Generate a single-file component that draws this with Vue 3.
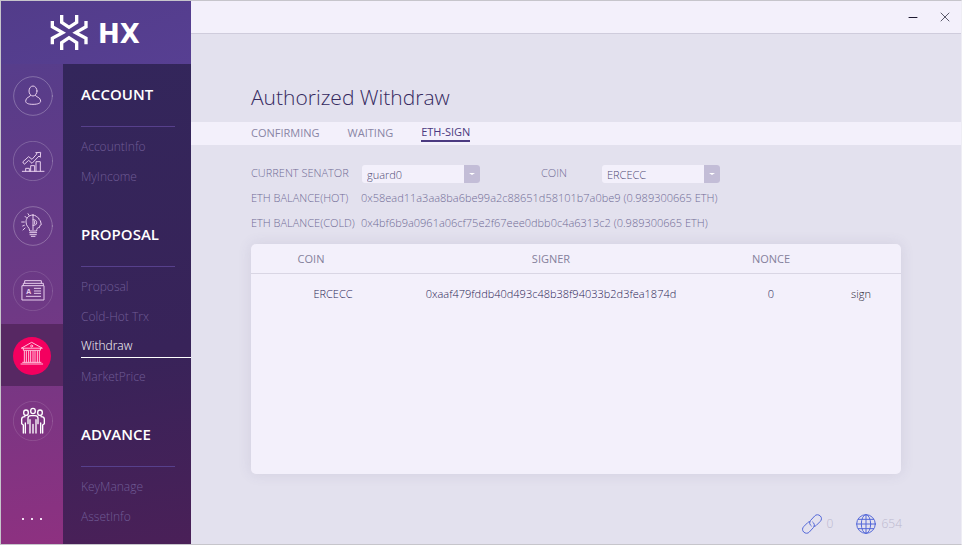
<script setup>
import { ref } from 'vue'

const groups = [
  { title: 'ACCOUNT', items: ['AccountInfo', 'MyIncome'] },
  { title: 'PROPOSAL', items: ['Proposal', 'Cold-Hot Trx', 'Withdraw', 'MarketPrice'] },
  { title: 'ADVANCE', items: ['KeyManage', 'AssetInfo'] },
]
const tabs = ['CONFIRMING', 'WAITING', 'ETH-SIGN']
const currentTab = ref('ETH-SIGN')
const currentItem = ref('Withdraw')
const senator = ref('guard0')
const coin = ref('ERCECC')
const rows = [
  { coin: 'ERCECC', signer: '0xaaf479fddb40d493c48b38f94033b2d3fea1874d', nonce: 0 },
]
</script>

<template>
  <div class="window">
    <aside class="sidebar">
      <div class="brand">
        <svg class="mark" viewBox="150 45 114 111" aria-hidden="true">
          <path d="M185 48v22l22 15 23-15V48M185 153v-22l22-15 23 15v22M157 66v17l31 18-31 17v18M258 66v17l-31 18 31 17v18" />
        </svg>
        <span class="wordmark">HX</span>
      </div>
      <div class="columns">
        <nav class="rail" aria-label="Sections">
          <button class="rail-item" aria-label="Account">
            <svg viewBox="0 0 120 120">
              <circle class="ring bright" cx="60" cy="60" r="58" />
              <ellipse cx="60" cy="45" rx="12" ry="15" />
              <path d="M53 58c-1 6-15 5-15 17 0 6 6 10 22 10s23-4 23-10c0-12-15-11-16-17" />
            </svg>
          </button>
          <button class="rail-item" aria-label="Income">
            <svg viewBox="0 0 120 120">
              <circle class="ring" cx="60" cy="60" r="59" />
              <path d="M28 91h65M38 91v-9h11v9M53 91V74h12v17M69 91V62h13v29" />
              <path d="M30 62l17-15 10 8 15-17-4-3 15-1-1 15-4-4-21 22-10-9-12 11z" />
            </svg>
          </button>
          <button class="rail-item" aria-label="Ideas">
            <svg viewBox="0 0 120 120">
              <circle class="ring bright" cx="60" cy="60" r="58" />
              <path d="M60 27c-14 0-21 10-21 21 0 14 11 15 11 27h21c0-8 3-11 8-10l2-7 4-2-2-8c0-5-5-6-5-9-1-6-8-5-9-9-3-1-6-3-9-3zM60 27v44M50 80h21M51 86h19M55 91h11" />
              <path d="M60 41c7-1 12 4 11 9 0 6-5 9-11 8M65 45v9M36 31l5 5M26 48h8M36 66l-6 6M45 23l3 5M29 60l5-2" />
            </svg>
          </button>
          <button class="rail-item" aria-label="Proposals">
            <svg viewBox="0 0 120 120">
              <circle class="ring faint" cx="60" cy="60" r="59" />
              <path d="M28 44h65v43H28zM31 43v-6h60v6M35 36v-7h50v7" />
              <path d="M64 52h19M64 60h19M64 67h19M40 76h43" />
              <text x="40" y="68">A</text>
            </svg>
          </button>
          <button class="rail-item active" aria-label="Withdraw">
            <svg viewBox="0 0 120 120">
              <circle class="disc" cx="60" cy="60" r="57" />
              <path d="M29 36l30-17 31 17zM34 37v6h51v-6M37 45v33M43 45v33M50 45v33M56 45v33M63 45v33M69 45v33M76 45v33M82 45v33M32 79h55M27 84h65" />
              <circle cx="59" cy="30" r="3" />
            </svg>
          </button>
          <button class="rail-item" aria-label="Members">
            <svg class="strong" viewBox="0 0 120 120">
              <circle class="ring faint" cx="60" cy="60" r="59" />
              <ellipse cx="39" cy="35" rx="7" ry="8" /><ellipse cx="60" cy="30" rx="7" ry="8" /><ellipse cx="81" cy="35" rx="7" ry="8" />
              <path d="M45 68V51c0-4 4-7 9-7h12c5 0 9 3 9 7v17M51 56v40M69 56v40M60 70v26M37 96V66M31 96V72l-5-4V54c0-4 4-7 10-7M83 96V66M89 96V72l5-4V54c0-4-4-7-10-7" />
            </svg>
          </button>
          <button class="more" aria-label="More"><i></i><i></i><i></i></button>
        </nav>
        <nav class="menu" aria-label="Pages">
          <section v-for="g in groups" :key="g.title" class="group">
            <h2>{{ g.title }}</h2>
            <ul>
              <li v-for="item in g.items" :key="item">
                <a href="#" :class="{ current: item === currentItem }" @click.prevent="currentItem = item">{{ item }}</a>
              </li>
            </ul>
          </section>
        </nav>
      </div>
    </aside>

    <main class="main">
      <header class="titlebar">
        <button aria-label="Minimize"><svg viewBox="0 0 10 10"><path class="dash" d="M1 5.5h8" /></svg></button>
        <button aria-label="Close"><svg viewBox="0 0 10 10"><path d="M1 1l8 8M9 1l-8 8" /></svg></button>
      </header>
      <h1>Authorized Withdraw</h1>
      <div class="tabs">
        <button v-for="t in tabs" :key="t" :class="{ selected: t === currentTab }" @click="currentTab = t">{{ t }}</button>
      </div>

      <div class="content">
        <div class="filters">
          <label for="senator">CURRENT SENATOR</label>
          <span class="picker">
            <select id="senator" v-model="senator"><option>guard0</option></select>
          </span>
          <label class="second" for="coin">COIN</label>
          <span class="picker">
            <select id="coin" v-model="coin"><option>ERCECC</option></select>
          </span>
        </div>
        <dl class="balances">
          <dt>ETH BALANCE(HOT)</dt>
          <dd>0x58ead11a3aa8ba6be99a2c88651d58101b7a0be9 (0.989300665 ETH)</dd>
          <dt>ETH BALANCE(COLD)</dt>
          <dd>0x4bf6b9a0961a06cf75e2f67eee0dbb0c4a6313c2 (0.989300665 ETH)</dd>
        </dl>
        <div class="panel">
          <table>
            <colgroup><col class="c-coin"><col class="c-signer"><col class="c-nonce"><col class="c-action"></colgroup>
            <thead>
              <tr><th>COIN</th><th>SIGNER</th><th>NONCE</th><th></th></tr>
            </thead>
            <tbody>
              <tr v-for="r in rows" :key="r.signer">
                <td class="coin">{{ r.coin }}</td><td>{{ r.signer }}</td><td>{{ r.nonce }}</td>
                <td class="action"><button>sign</button></td>
              </tr>
            </tbody>
          </table>
        </div>
      </div>

      <footer class="status">
        <span class="stat">
          <svg viewBox="0 0 60 60" aria-hidden="true">
            <path d="M28 36c-6-4-7-12-2-17L38 6c4-5 12-5 17 0s4 12 0 16L43 34c-2 2-4 3-7 3" />
            <path d="M32 24c6 4 7 12 2 17L22 54c-4 5-12 5-17 0s-4-12 0-16l12-12c2-2 4-3 7-3" />
          </svg>0
        </span>
        <span class="stat">
          <svg viewBox="0 0 60 60" aria-hidden="true">
            <circle cx="30" cy="30" r="28" /><ellipse cx="30" cy="30" rx="14" ry="28" />
            <path d="M30 2v56M2 30h56M7 16h46M7 44h46" />
          </svg>654
        </span>
      </footer>
    </main>
  </div>
</template>

<style>
body { margin: 0; }
</style>

<style scoped>
* { box-sizing: border-box; }
.window {
  display: flex;
  min-height: 100vh;
  border: 1px solid #c6c5cb;
  border-right-color: #eeedf4;
  background: #e3e1ee;
  font-family: "Open Sans", "Noto Sans", sans-serif;
  font-size: 11px;
  font-weight: 300;
  color: #716c96;
}
button {
  padding: 0;
  border: 0;
  background: none;
  font: inherit;
  color: inherit;
  cursor: pointer;
}
h1, h2, ul, dl, dd { margin: 0; padding: 0; }
svg { fill: none; stroke-linecap: round; stroke-linejoin: round; }

.sidebar {
  display: flex;
  flex-direction: column;
  flex: 0 0 190px;
  background: linear-gradient(172deg, #523f8f 0%, #5a3c89 18%, #6f3985 55%, #903080 100%);
}
.brand {
  display: flex;
  align-items: center;
  gap: 10px;
  height: 63px;
  padding-left: 49px;
  background: linear-gradient(160deg, #523c8a, #573f92);
  color: #fff;
}
.mark { width: 38px; height: 37px; stroke: #fff; stroke-width: 10; stroke-linecap: butt; stroke-linejoin: miter; }
.wordmark { padding-top: 2px; font: 700 26px/36px "DejaVu Sans", sans-serif; }
.columns { display: flex; flex: 1; }
.rail { display: flex; flex-direction: column; gap: 3px; width: 62px; }
.rail-item { display: flex; align-items: center; justify-content: center; height: 62px; padding: 1px 0 0 1px; }
.rail-item svg { width: 40px; height: 40px; stroke: #e6cdec; stroke-width: 3; }
.rail-item .strong { stroke: #fff; stroke-width: 4; }
.rail-item text { font: 700 21px "Open Sans", sans-serif; fill: #e6cdec; stroke: none; }
.rail-item .ring { stroke: #fff; stroke-opacity: 0.2; stroke-width: 3; }
.rail-item .bright { stroke-opacity: 0.26; }
.rail-item .faint { stroke-opacity: 0.12; }
.rail-item.active { padding-left: 0; background: #572863; }
.rail-item.active svg { stroke: #ffc4dd; }
.rail-item .disc { fill: #f4005f; stroke: none; }
.more { display: flex; justify-content: center; gap: 7px; margin-top: auto; padding: 12px 0 24px; }
.more i { width: 2px; height: 2px; background: #f2ddf2; }

.menu {
  display: flex;
  flex-direction: column;
  gap: 12px;
  flex: 1;
  background: linear-gradient(172deg, #33265b 0%, #382359 60%, #4a2058 100%);
}
.group h2 {
  margin: 0 16px 0 18px;
  padding-bottom: 2px;
  border-bottom: 1px solid #57408c;
  font-size: 15px;
  font-weight: 600;
  line-height: 60px;
  color: #fff;
}
.group ul { padding-top: 5px; list-style: none; }
.group li { height: 30px; padding: 4px 0 0 18px; }
.group a { display: block; height: 22px; font-size: 12px; line-height: 22px; color: #705c96; text-decoration: none; }
.group a.current { border-bottom: 1px solid #fff; color: #fff; line-height: 20px; }

.main { display: flex; flex-direction: column; flex: 1; min-width: 0; }
.titlebar {
  display: flex;
  justify-content: flex-end;
  gap: 22px;
  height: 33px;
  padding-right: 11px;
  border-bottom: 1px solid #cfccdc;
  background: #f3f0fb;
}
.titlebar svg { display: block; width: 10px; height: 10px; stroke: #5b5a6b; stroke-width: 1; }
.titlebar .dash { stroke: #1d1930; }
h1 { padding: 47px 60px 9px; font-size: 21px; font-weight: 300; line-height: 32px; color: #35295f; }
.tabs {
  display: flex;
  gap: 28px;
  height: 23px;
  padding-left: 60px;
  background: #f3f0fb;
}
.tabs button { height: 20px; font-weight: 400; line-height: 22px; color: #8985a5; }
.tabs .selected { border-bottom: 2px solid #4b3a80; line-height: 20px; color: #4b3a80; }

.content { padding: 20px 60px 0; }
.filters { display: grid; grid-template-columns: 111px 118px 122px 118px; align-items: center; height: 18px; }
.filters label { line-height: 16px; padding-bottom: 2px; }
.filters .second { padding-left: 61px; }
.picker { position: relative; display: flex; height: 18px; border-radius: 3px; overflow: hidden; background: #f3f0fb; }
.picker::before {
  content: "";
  position: absolute;
  inset: 0 0 0 auto;
  width: 16px;
  background: #c3bdd7;
  pointer-events: none;
}
.picker::after {
  content: "";
  position: absolute;
  top: 8px;
  right: 5px;
  border: 3px solid transparent;
  border-top: 2px solid #fff;
  border-bottom: 0;
  pointer-events: none;
}
.picker select {
  flex: 1;
  padding: 0 20px 0 5px;
  border: 0;
  appearance: none;
  background: none;
  font: inherit;
  color: #4f4a74;
}
.balances { display: grid; grid-template-columns: 110px 1fr; padding-top: 2px; line-height: 25px; }
.balances dd { white-space: nowrap; }
.panel {
  min-height: 230px;
  margin-top: 9px;
  border-radius: 5px;
  background: #f3f0fb;
  box-shadow: 0 0 14px rgba(80, 70, 120, 0.12);
}
table { width: 100%; border-collapse: collapse; table-layout: fixed; text-align: center; }
.c-coin { width: 120px; }
.c-nonce { width: 80px; }
.c-action { width: 90px; }
th { height: 29px; padding: 0; border-bottom: 1px solid #d9d6e4; font-weight: 400; color: #85819b; }
td { height: 41px; padding: 0; color: #2a1d55; }
td.coin { padding-left: 44px; }
td.action { padding-left: 10px; color: #1f1b33; }

.status { display: flex; justify-content: flex-end; gap: 23px; margin-top: auto; padding: 0 59px 10px; }
.stat { display: flex; align-items: center; gap: 5px; font-size: 12px; line-height: 20px; color: #bcb8ce; }
.stat svg { width: 20px; height: 20px; stroke: #5468d8; stroke-width: 3; }
</style>
